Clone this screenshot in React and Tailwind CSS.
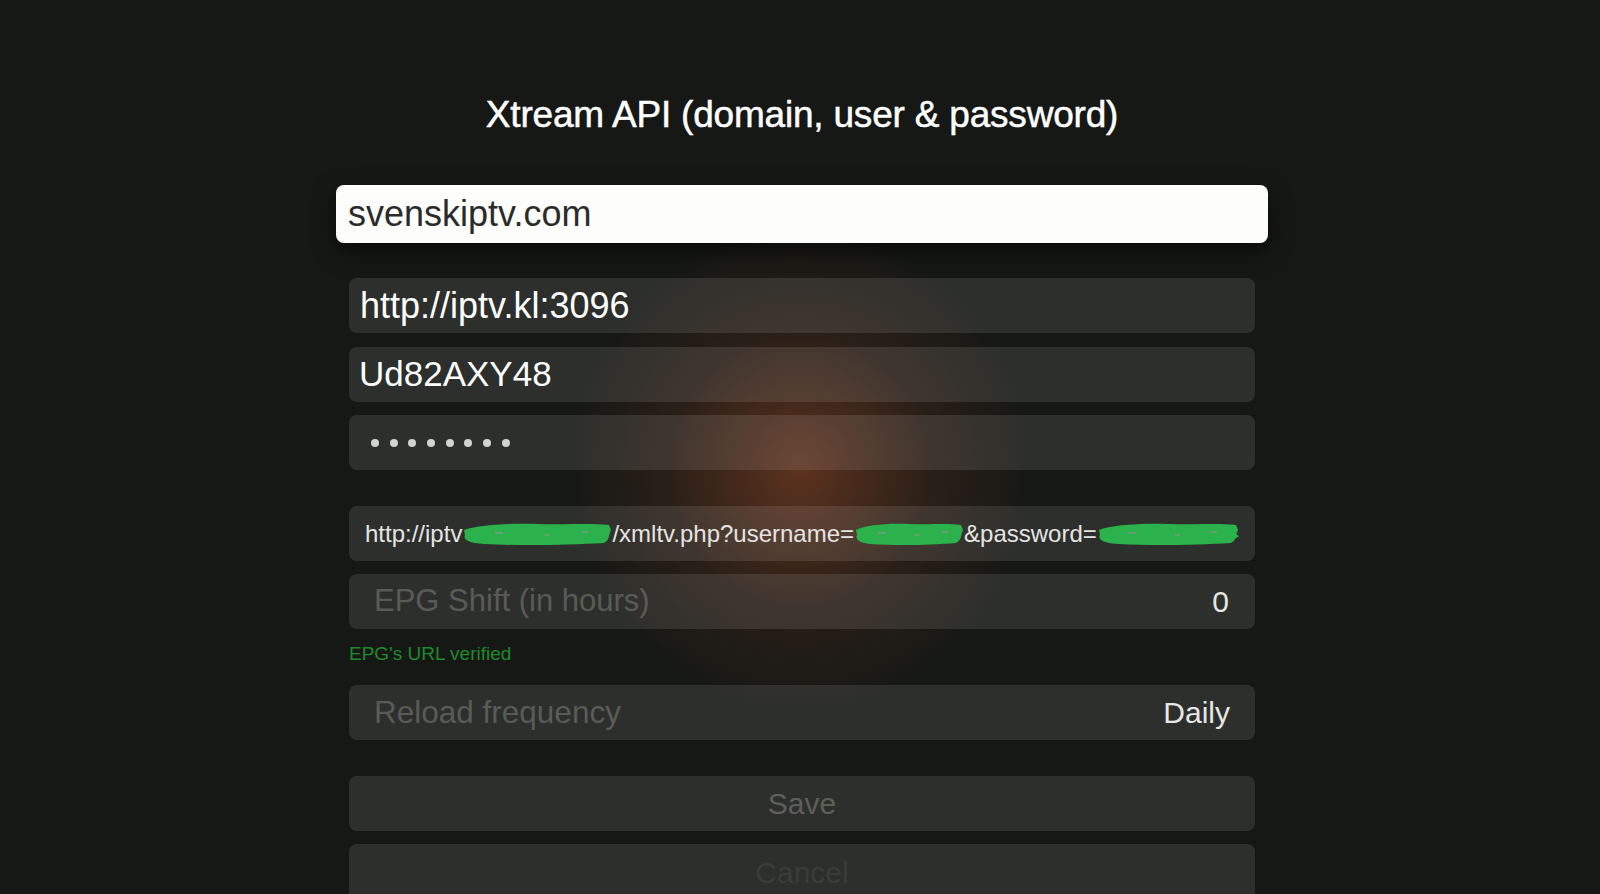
const font = { fontFamily: '"Liberation Sans", Arial, sans-serif' }

function Scribble({ w, tail }) {
  return (
    <svg width={w} height="26" viewBox={`0 0 ${w} 26`} className="inline-block align-middle shrink-0">
      <path
        d={`M2 9 C${w * 0.1} 4, ${w * 0.3} 2, ${w * 0.5} 3 C${w * 0.7} 4, ${w * 0.85} 2, ${w - 3} 4 L${w - 1} 9 C${w - 4} 15, ${w - 2} 19, ${w - 8} 22 C${w * 0.7} 24, ${w * 0.4} 25, ${w * 0.15} 23 C5 22, 1 18, 3 14 Z`}
        fill="#2bb24c"
      />
      {tail && <path d={`M${w - 34} 11 C${w - 18} 10, ${w - 4} 11, ${w} 15 C${w - 4} 20, ${w - 20} 19, ${w - 34} 18 Z`} fill="#2bb24c" />}
      <path d={`M${w * 0.22} 12 h8 M${w * 0.55} 14 h5 M${w * 0.8} 11 h6`} stroke="#7d9a80" strokeWidth="1.5" />
    </svg>
  )
}

function Field({ children, className = "" }) {
  return (
    <div className={`h-[55px] rounded-lg bg-white/[0.10] flex items-center ${className}`}>
      {children}
    </div>
  )
}

export default function App() {
  return (
    <div
      className="w-full h-[894px] overflow-hidden bg-[#161815] bg-[radial-gradient(ellipse_230px_240px_at_50%_470px,rgba(150,72,38,0.55),rgba(150,72,38,0.14)_60%,transparent_100%)]"
      style={font}
    >
      <div className="w-[932px] mx-auto translate-x-[2px] pt-[94px] flex flex-col">
        {/* Title */}
        <h1 className="text-center text-white text-[37px] leading-[42px] tracking-[-0.2px] [-webkit-text-stroke:0.5px_white]">
          Xtream API (domain, user &amp; password)
        </h1>

        {/* Domain input (focused) */}
        <div className="mt-[49px] h-[58px] rounded-lg bg-[#fdfdfc] shadow-[0_8px_22px_rgba(0,0,0,0.55)] flex items-center pl-[12px]">
          <span className="text-[36px] text-[#2b2b2b]">svenskiptv.com</span>
        </div>

        <div className="mx-[13px] flex flex-col">
          <Field className="mt-[35px] pl-[11px]">
            <span className="text-[36px] text-white">http://iptv.kl:3096</span>
          </Field>
          <Field className="mt-[14px] pl-[10px]">
            <span className="text-[35px] text-white">Ud82AXY48</span>
          </Field>
          <Field className="mt-[13px] pl-[22px] gap-[10.7px]">
            {[0, 1, 2, 3, 4, 5, 6, 7].map((i) => (
              <span key={i} className="w-2 h-2 rounded-full bg-[#d2d2d0]" />
            ))}
          </Field>

          {/* EPG url */}
          <Field className="mt-[36px] pl-[16px] overflow-hidden whitespace-nowrap">
            <span className="text-[24px] text-[#e4e4e2] flex items-center">
              <span>http://iptv</span>
              <Scribble w={150} />
              <span>/xmltv.php?username=</span>
              <Scribble w={110} />
              <span>&amp;password=</span>
              <Scribble w={142} tail />
            </span>
          </Field>

          <Field className="mt-[13px] pl-[25px] pr-[26px] justify-between">
            <span className="text-[31px] text-[#595b57]">EPG Shift (in hours)</span>
            <span className="text-[30px] text-[#e6e6e4]">0</span>
          </Field>

          <p className="mt-[15px] mb-[21px] text-[19px] leading-[20px] text-[#1f8a2c]">EPG's URL verified</p>

          <Field className="pl-[25px] pr-[25px] justify-between">
            <span className="text-[31.5px] text-[#595b57]">Reload frequency</span>
            <span className="text-[30px] text-[#e6e6e4]">Daily</span>
          </Field>

          <Field className="mt-[36px] justify-center">
            <span className="text-[30px] text-[#5d5f5b]">Save</span>
          </Field>
          <Field className="mt-[13px] justify-center bg-white/[0.07]">
            <span className="text-[30px] text-[#3a3c39] mt-[2px]">Cancel</span>
          </Field>
        </div>
      </div>
    </div>
  )
}
